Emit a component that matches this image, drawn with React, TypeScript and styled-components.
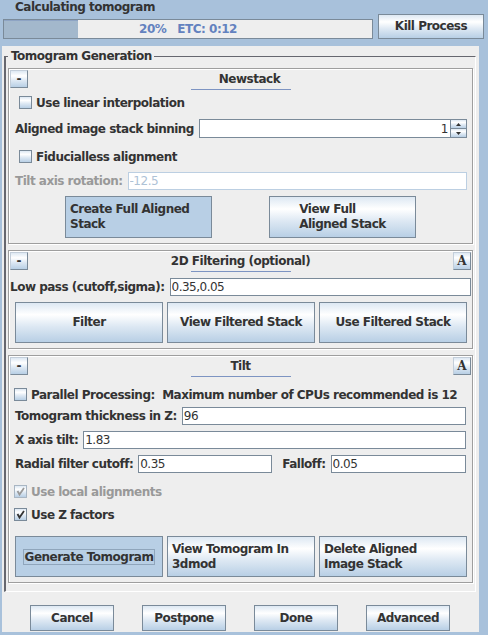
import React from 'react';
import styled, { createGlobalStyle } from 'styled-components';

const colors = {
    desktop: '#a8c1db',
    control: '#eeeeee',
    text: '#333333',
    disabledText: '#999999',
    dark: '#7a8a99',
    primary1: '#6382bf',
    primary2: '#a3b8cc',
    primary3: '#b8cfe5',
    etched: '#9e9e9e',
    titled: '#66676f',
    white: '#ffffff',
};

const oceanGradient = `linear-gradient(to bottom, #dde8f3 0%, #ffffff 30%, #dde8f3 60%, #b8cfe5 100%)`;
const uiFont = `"DejaVu Sans", "Liberation Sans", sans-serif`;

const GlobalStyle = createGlobalStyle`
    * {
        box-sizing: border-box;
    }

    html, body {
        margin: 0;
        padding: 0;
        background: ${colors.desktop};
    }

    body {
        font-family: ${uiFont};
        font-size: 12px;
        font-weight: bold;
        letter-spacing: -0.5px;
        color: ${colors.text};
    }
`;

const progress = 20;

type CheckProps = {
    label: string;
    checked?: boolean;
    disabled?: boolean;
    indent: number;
    mt: number;
};

const Check: React.FC<CheckProps> = ({ label, checked, disabled, indent, mt }) => (
    <CheckRow $mt={mt} $indent={indent}>
        <CheckBox $disabled={disabled}>
            {checked && (
                <svg width="11" height="11" viewBox="0 0 11 11">
                    <polyline points="2.5,5 4.5,8.5 9,2" fill="none" stroke={disabled ? colors.disabledText : colors.text} strokeWidth="1.8" />
                </svg>
            )}
        </CheckBox>
        <CheckText $disabled={disabled}>{label}</CheckText>
    </CheckRow>
);

type SectionProps = {
    title: string;
    advanced?: boolean;
    children: React.ReactNode;
};

const Section: React.FC<SectionProps> = ({ title, advanced, children }) => (
    <Panel>
        <PanelHeader>
            <SmallButton>-</SmallButton>
            <PanelTitle>{title}</PanelTitle>
            {advanced && <SmallButton $serif>A</SmallButton>}
        </PanelHeader>
        <TitleRule />
        {children}
    </Panel>
);

const App: React.FC = () => (
    <>
        <GlobalStyle />
        <Window>
            <StatusTitle>Calculating tomogram</StatusTitle>
            <ProgressRow>
                <ProgressBar>
                    <ProgressFill style={{ width: `${progress}%` }} />
                    <ProgressText>{`${progress}%   ETC: 0:12`}</ProgressText>
                </ProgressBar>
                <PushButton $w={106} $h={25}>Kill Process</PushButton>
            </ProgressRow>

            <MainPanel>
                <Group>
                    <Legend>Tomogram Generation</Legend>

                    <Section title="Newstack">
                        <Check label="Use linear interpolation" indent={10} mt={3} />
                        <FieldRow $mt={7} $pl={6} $pr={5} $h={19}>
                            <FieldLabel>Aligned image stack binning</FieldLabel>
                            <Spinner>
                                <TextField defaultValue="1" $right $h={19} />
                                <SpinnerArrows>
                                    <ArrowButton>
                                        <svg width="5" height="3" viewBox="0 0 5 3"><polygon points="2.5,0 5,3 0,3" fill={colors.text} /></svg>
                                    </ArrowButton>
                                    <ArrowButton>
                                        <svg width="5" height="3" viewBox="0 0 5 3"><polygon points="0,0 5,0 2.5,3" fill={colors.text} /></svg>
                                    </ArrowButton>
                                </SpinnerArrows>
                            </Spinner>
                        </FieldRow>
                        <Check label="Fiducialless alignment" indent={10} mt={9} />
                        <FieldRow $mt={6} $pl={6} $pr={5}>
                            <FieldLabel $disabled>Tilt axis rotation:</FieldLabel>
                            <TextField defaultValue="-12.5" disabled />
                        </FieldRow>
                        <ButtonRow $mt={6} $centered>
                            <PushButton $w={147} $h={42} $selected $align="left">
                                <span>Create Full Aligned<br />Stack</span>
                            </PushButton>
                            <PushButton $w={147} $h={42}>
                                <span>View Full<br />Aligned Stack</span>
                            </PushButton>
                        </ButtonRow>
                    </Section>

                    <Section title="2D Filtering (optional)" advanced>
                        <FieldRow $mt={6} $pl={1} $pr={1}>
                            <FieldLabel>Low pass (cutoff,sigma):</FieldLabel>
                            <TextField defaultValue="0.35,0.05" />
                        </FieldRow>
                        <ButtonRow $mt={6}>
                            <PushButton $w={148} $h={41}>Filter</PushButton>
                            <PushButton $w={148} $h={41}>View Filtered Stack</PushButton>
                            <PushButton $w={148} $h={41}>Use Filtered Stack</PushButton>
                        </ButtonRow>
                    </Section>

                    <Section title="Tilt" advanced>
                        <Check label="Parallel Processing:  Maximum number of CPUs recommended is 12" indent={5} mt={8} />
                        <FieldRow $mt={3} $pl={6} $pr={6}>
                            <FieldLabel>Tomogram thickness in Z:</FieldLabel>
                            <TextField defaultValue="96" />
                        </FieldRow>
                        <FieldRow $mt={6} $pl={6} $pr={6}>
                            <FieldLabel>X axis tilt:</FieldLabel>
                            <TextField defaultValue="1.83" />
                        </FieldRow>
                        <FieldRow $mt={6} $pl={6} $pr={6} $gap={10}>
                            <FieldPair>
                                <FieldLabel>Radial filter cutoff:</FieldLabel>
                                <TextField defaultValue="0.35" $w={134} />
                            </FieldPair>
                            <FieldPair $grow>
                                <FieldLabel>Falloff:</FieldLabel>
                                <TextField defaultValue="0.05" />
                            </FieldPair>
                        </FieldRow>
                        <Check label="Use local alignments" checked disabled indent={5} mt={9} />
                        <Check label="Use Z factors" checked indent={5} mt={4} />
                        <ButtonRow $mt={12}>
                            <PushButton $w={148} $h={41} $selected>
                                <FocusRing>Generate Tomogram</FocusRing>
                            </PushButton>
                            <PushButton $w={148} $h={41} $align="left">
                                <span>View Tomogram In<br />3dmod</span>
                            </PushButton>
                            <PushButton $w={148} $h={41} $align="left">
                                <span>Delete Aligned<br />Image Stack</span>
                            </PushButton>
                        </ButtonRow>
                    </Section>
                </Group>

                <DialogButtons>
                    <PushButton $w={84} $h={26}>Cancel</PushButton>
                    <PushButton $w={84} $h={26}>Postpone</PushButton>
                    <PushButton $w={84} $h={26}>Done</PushButton>
                    <PushButton $w={84} $h={26}>Advanced</PushButton>
                </DialogButtons>
            </MainPanel>
        </Window>
    </>
);

const Window = styled.div`
    width: 488px;
    height: 635px;
    overflow: hidden;
    background: ${colors.desktop};
    display: flex;
    flex-direction: column;
`;

const StatusTitle = styled.div`
    height: 14px;
    line-height: 15px;
    padding-left: 15px;
    white-space: nowrap;
`;

const ProgressRow = styled.div`
    height: 25px;
    display: flex;
    align-items: flex-end;
    padding-left: 3px;
    gap: 5px;
`;

const ProgressBar = styled.div`
    position: relative;
    width: 370px;
    height: 20px;
    border: 1px solid ${colors.dark};
    background: ${colors.control};
    display: flex;
    justify-content: center;
    align-items: center;
`;

const ProgressFill = styled.div`
    position: absolute;
    left: 0;
    top: 0;
    bottom: 0;
    background: ${colors.primary2};
    border-top: 1px solid #8ea4c4;
`;

const ProgressText = styled.span`
    position: relative;
    color: ${colors.primary1};
    white-space: pre;
    line-height: 18px;
`;

const PushButton = styled.button<{ $w: number; $h: number; $selected?: boolean; $align?: 'left' | 'center' }>`
    flex: none;
    width: ${({ $w }) => $w}px;
    height: ${({ $h }) => $h}px;
    padding: 0 4px;
    border: 1px solid ${colors.dark};
    border-radius: 0;
    background: ${({ $selected }) => ($selected ? colors.primary3 : oceanGradient)};
    font: inherit;
    letter-spacing: inherit;
    color: ${colors.text};
    line-height: 15px;
    text-align: left;
    white-space: nowrap;
    display: flex;
    align-items: center;
    justify-content: ${({ $align }) => ($align === 'left' ? 'flex-start' : 'center')};
    cursor: pointer;
`;

const FocusRing = styled.span`
    border: 1px solid #8fa5bb;
    padding: 0 1px;
    line-height: 14px;
`;

const MainPanel = styled.div`
    margin: 7px 0 0 2px;
    width: 477px;
    height: 586px;
    background: ${colors.control};
    padding: 3px 3px 0 2px;
    display: flex;
    flex-direction: column;
`;

const Group = styled.fieldset`
    margin: 0;
    min-width: 0;
    padding: 5px 2px 8px 2px;
    border-style: solid;
    border-width: 1px 1px 1px 2px;
    border-color: ${colors.titled} ${colors.white} ${colors.white} ${colors.titled};
    display: flex;
    flex-direction: column;
`;

const Legend = styled.legend`
    padding: 0 2px 0 3px;
    line-height: 14px;
    white-space: nowrap;
`;

const Panel = styled.section`
    border: 1px solid ${colors.etched};
    box-shadow: inset 1px 1px 0 ${colors.white}, 1px 1px 0 ${colors.white};
    padding: 1px 0 5px 0;
    display: flex;
    flex-direction: column;

    & + & {
        margin-top: 6px;
    }
`;

const PanelHeader = styled.div`
    height: 18px;
    padding: 0 1px;
    display: flex;
    align-items: center;
`;

const SmallButton = styled.button<{ $serif?: boolean }>`
    flex: none;
    width: 18px;
    height: 18px;
    padding: 0;
    border: 1px solid;
    border-color: #c3ceda ${colors.dark} ${colors.dark} #c3ceda;
    border-radius: 0;
    background: ${oceanGradient};
    color: ${colors.text};
    font-family: ${({ $serif }) => ($serif ? `"DejaVu Serif", "Liberation Serif", serif` : uiFont)};
    font-size: 12px;
    font-weight: bold;
    letter-spacing: 0;
    line-height: 16px;
    cursor: pointer;
`;

const PanelTitle = styled.div`
    flex: 1;
    text-align: center;
    line-height: 18px;
    white-space: nowrap;
`;

const TitleRule = styled.div`
    align-self: center;
    width: 100px;
    height: 1px;
    margin-top: 1px;
    background: #7d94c2;
`;

const CheckRow = styled.label<{ $mt: number; $indent: number }>`
    height: 19px;
    margin-top: ${({ $mt }) => $mt}px;
    padding-left: ${({ $indent }) => $indent}px;
    display: flex;
    align-items: center;
    gap: 4px;
`;

const CheckBox = styled.span<{ $disabled?: boolean }>`
    flex: none;
    width: 13px;
    height: 13px;
    border: 1px solid ${({ $disabled }) => ($disabled ? '#a9b6c3' : colors.dark)};
    background: ${oceanGradient};
    display: flex;
    align-items: center;
    justify-content: center;
`;

const CheckText = styled.span<{ $disabled?: boolean }>`
    color: ${({ $disabled }) => ($disabled ? colors.disabledText : colors.text)};
    white-space: pre;
`;

const FieldRow = styled.div<{ $mt: number; $pl: number; $pr: number; $h?: number; $gap?: number }>`
    height: ${({ $h }) => $h ?? 18}px;
    margin-top: ${({ $mt }) => $mt}px;
    padding: 0 ${({ $pr }) => $pr}px 0 ${({ $pl }) => $pl}px;
    display: flex;
    align-items: center;
    gap: ${({ $gap }) => $gap ?? 5}px;
`;

const FieldPair = styled.div<{ $grow?: boolean }>`
    flex: ${({ $grow }) => ($grow ? '1 1 0' : 'none')};
    min-width: 0;
    display: flex;
    align-items: center;
    gap: 5px;
`;

const FieldLabel = styled.span<{ $disabled?: boolean }>`
    flex: none;
    white-space: nowrap;
    color: ${({ $disabled }) => ($disabled ? colors.disabledText : colors.text)};
`;

const TextField = styled.input<{ $w?: number; $h?: number; $right?: boolean }>`
    flex: ${({ $w }) => ($w ? 'none' : '1 1 0')};
    width: ${({ $w }) => ($w ? `${$w}px` : 'auto')};
    min-width: 0;
    height: ${({ $h }) => $h ?? 18}px;
    padding: 0 2px 0 1px;
    border: 1px solid ${colors.dark};
    border-radius: 0;
    background: ${colors.white};
    font-family: ${uiFont};
    font-size: 12px;
    font-weight: normal;
    letter-spacing: -0.5px;
    color: ${colors.text};
    text-align: ${({ $right }) => ($right ? 'right' : 'left')};
    outline: none;

    &:disabled {
        border-color: #bccfe2;
        color: #aec2d6;
        background: ${colors.white};
    }
`;

const Spinner = styled.div`
    flex: 1;
    height: 19px;
    display: flex;
`;

const SpinnerArrows = styled.div`
    flex: none;
    width: 16px;
    display: flex;
    flex-direction: column;
    border: 1px solid ${colors.dark};
    border-left: none;
`;

const ArrowButton = styled.button`
    flex: 1;
    padding: 0;
    border: none;
    border-radius: 0;
    background: ${oceanGradient};
    display: flex;
    align-items: center;
    justify-content: center;

    & + & {
        border-top: 1px solid ${colors.dark};
    }
`;

const ButtonRow = styled.div<{ $mt: number; $centered?: boolean }>`
    margin-top: ${({ $mt }) => $mt}px;
    padding-left: ${({ $centered }) => ($centered ? 0 : 6)}px;
    display: flex;
    justify-content: ${({ $centered }) => ($centered ? 'center' : 'flex-start')};
    gap: ${({ $centered }) => ($centered ? 57 : 4)}px;
`;

const DialogButtons = styled.div`
    margin-top: 13px;
    display: flex;
    justify-content: center;
    gap: 28px;
`;

export default App;
